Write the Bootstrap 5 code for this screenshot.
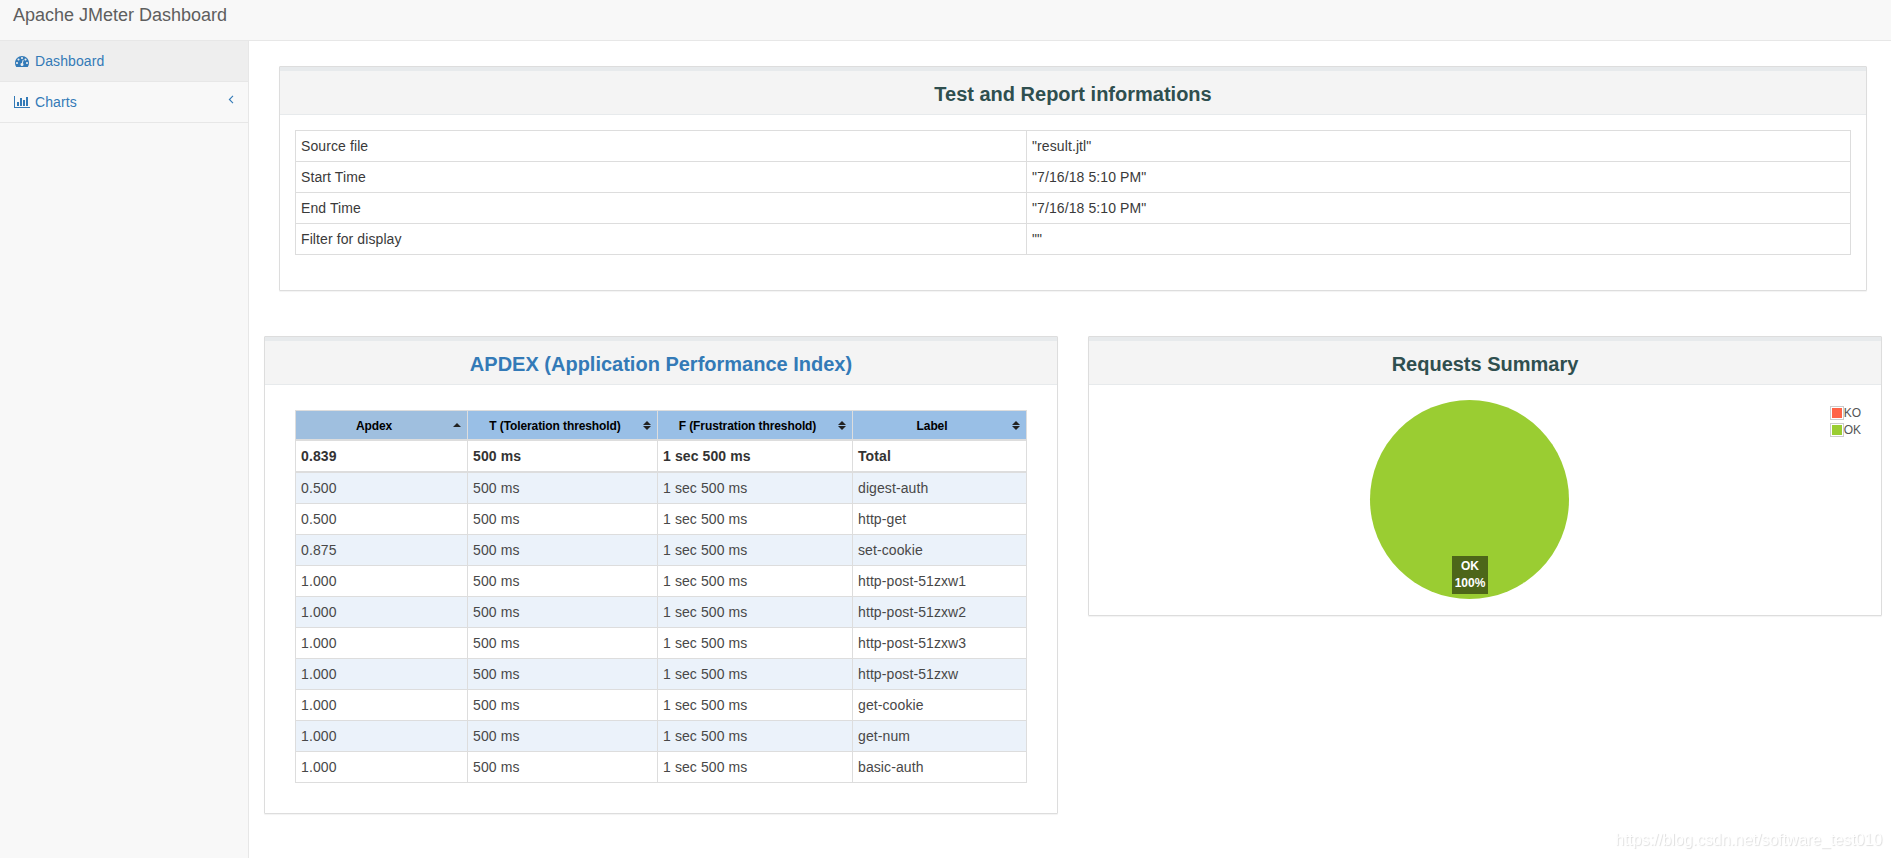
<!DOCTYPE html>
<html lang="en">
<head>
<meta charset="utf-8">
<title>Apache JMeter Dashboard</title>
<meta name="viewport" content="width=device-width, initial-scale=1">
<link href="https://cdn.jsdelivr.net/npm/bootstrap@5.3.0/dist/css/bootstrap.min.css" rel="stylesheet">
<style>
  body { font-family: "Liberation Sans", Arial, sans-serif; font-size: 14px; line-height: 20px; color: #333; background: #fff; }
  .topbar { height: 41px; background: #f8f8f8; border-bottom: 1px solid #e7e7e7; }
  .topbar .navbar-brand { font-size: 18px; line-height: 20px; color: #5e5e5e; margin: 5px 0 0 13px; padding: 0; }
  .sidebar { width: 249px; background: #f8f8f8; border-right: 1px solid #e7e7e7; }
  .sidebar .nav-link { height: 41px; padding: 10px 14px; color: #337ab7; border-bottom: 1px solid #e7e7e7; letter-spacing: .1px; }
  .sidebar .nav-link.active { background: #eee; }
  .sidebar svg { fill: #337ab7; flex: none; margin-top: 3px; }
  .ico { width: 16px; margin-right: 5px; display: flex; justify-content: center; }
  .content { padding: 25px 9px 0 15px; min-width: 0; }
  .panel { border: 1px solid #ddd; border-radius: 1px; box-shadow: 0 1px 1px rgba(0,0,0,.05); }
  .panel > .card-header { background: #f4f4f4; border-top: 4px solid #e7eaec; border-bottom: 1px solid #e7eaec; border-radius: 0; padding: 12px 15px 9px; font-size: 20px; line-height: 22px; font-weight: 700; color: #2f4f4f; text-align: center; height: 48px; }
  .panel > .card-header a { color: #337ab7; text-decoration: none; }
  .panel > .card-body { padding: 15px; }
  .info-panel { margin: 0 15px 45px; height: 225px; }
  .panels { display: grid; grid-template-columns: 1fr 1fr; gap: 30px; align-items: start; }
  .apdex-panel { height: 478px; }
  .apdex-panel > .card-body { padding: 25px 30px; }
  .pie-panel { height: 280px; }
  .grid-table { border-collapse: separate; border-spacing: 0; table-layout: fixed; border: solid #ddd; border-width: 1px 0 0 1px; margin: 0; color: #333; }
  .grid-table > :not(caption) > * > * { padding: 5px; border: solid #ddd; border-width: 0 1px 1px 0; box-shadow: none; background: none; line-height: 20px; letter-spacing: .1px; color: #3a3a3a; }
  .info-table col:first-child { width: 731px; }
  .sort-table.grid-table > tbody > tr > td { color: #484848; }
  .sort-table.grid-table > thead > tr > th { background: #99bfe6; color: #000; font-size: 12px; padding: 5px 20px 3px 5px; text-align: center; border-bottom-width: 2px; position: relative; white-space: nowrap; letter-spacing: -.1px; }
  .sort-table.grid-table > thead > tr > th.sorted { background: #9fbfdf; }
  .sort-table thead svg { position: absolute; right: 6px; top: 10px; fill: #222; }
  .sort-table.grid-table > tbody > .total > td { font-weight: 700; border-bottom-width: 2px; color: #333; }
  .sort-table.grid-table > .rows > tr:nth-child(odd) > td { background: #ebf2fa; }
  .chart { height: 200px; padding-right: 31px; }
  .pie { width: 199px; height: 199px; border-radius: 50%; background: #9acd32; margin: 0 auto; position: relative; }
  .pie-tag { position: absolute; left: 82px; bottom: 5px; width: 36px; height: 38px; padding: 2px 0; background: rgba(0,0,0,.5); color: #fff; font-size: 12px; line-height: 17px; font-weight: 700; text-align: center; }
  .legend { position: absolute; right: 20px; top: 20px; font-size: 12px; line-height: 17px; color: #545454; }
  .legend li { height: 17px; display: flex; }
  .swatch { width: 14px; height: 14px; border: 1px solid #ccc; padding: 1px; background-clip: content-box; background-color: var(--c); margin-top: 1px; }
  .stamp { position: fixed; right: 9px; bottom: 8px; font-size: 16px; line-height: 20px; letter-spacing: -.07px; color: #fff; text-shadow: 1px 1px 1px #dedede; }
</style>
</head>
<body class="vh-100 d-flex flex-column overflow-hidden">
<nav class="navbar topbar p-0 align-items-start">
  <a class="navbar-brand" href="#">Apache JMeter Dashboard</a>
</nav>
<div class="d-flex flex-grow-1">
  <aside class="sidebar flex-shrink-0">
    <nav class="nav flex-column">
      <a class="nav-link active d-flex" href="#">
        <span class="ico"><svg width="14" height="14" viewBox="0 0 1792 1792"><path d="M384 1152q0-53-37.500-90.500t-90.500-37.500-90.500 37.500-37.500 90.500 37.500 90.500 90.500 37.500 90.500-37.500 37.500-90.500zm192-448q0-53-37.500-90.500t-90.500-37.500-90.500 37.500-37.500 90.500 37.500 90.500 90.500 37.500 90.500-37.500 37.500-90.500zm428 481l101-382q6-26-7.500-48.500t-38.500-29.500-48 6.500-30 39.500l-101 382q-60 5-107 43.500t-63 98.500q-20 77 20 146t117 89 146-20 89-117q16-60-6-117t-72-91zm660-33q0-53-37.500-90.500t-90.500-37.500-90.500 37.500-37.500 90.500 37.500 90.500 90.500 37.500 90.500-37.500 37.500-90.500zm-640-640q0-53-37.500-90.500t-90.500-37.500-90.500 37.500-37.500 90.500 37.500 90.500 90.500 37.500 90.500-37.500 37.500-90.500zm448 192q0-53-37.500-90.500t-90.500-37.500-90.500 37.500-37.500 90.500 37.500 90.500 90.500 37.500 90.500-37.500 37.500-90.500zm320 448q0 261-141 483-19 29-54 29h-1402q-35 0-54-29-141-221-141-483 0-182 71-348t191-286 286-191 348-71 348 71 286 191 191 286 71 348z"/></svg></span>
        Dashboard
      </a>
      <a class="nav-link d-flex" href="#">
        <span class="ico"><svg width="16" height="14" viewBox="0 0 2048 1792"><path d="M640 896v512h-256v-512h256zm384-512v1024h-256v-1024h256zm1024 1152v128h-2048v-1536h128v1408h1920zm-640-896v768h-256v-768h256zm384-384v1152h-256v-1152h256z"/></svg></span>
        Charts
        <svg class="ms-auto" width="6" height="9" viewBox="0 0 6 9"><path d="M5 .9 1.400 4.500 5 8.100" fill="none" stroke="#337ab7" stroke-width="1.100"/></svg>
      </a>
    </nav>
  </aside>
  <main class="content flex-grow-1">
    <section class="card panel info-panel">
      <div class="card-header">Test and Report informations</div>
      <div class="card-body">
        <table class="table grid-table info-table">
          <colgroup><col><col></colgroup>
          <tbody>
            <tr><td>Source file</td><td>"result.jtl"</td></tr>
            <tr><td>Start Time</td><td>"7/16/18 5:10 PM"</td></tr>
            <tr><td>End Time</td><td>"7/16/18 5:10 PM"</td></tr>
            <tr><td>Filter for display</td><td>""</td></tr>
          </tbody>
        </table>
      </div>
    </section>
    <div class="panels">
      <section class="card panel apdex-panel">
        <div class="card-header"><a href="#">APDEX (Application Performance Index)</a></div>
        <div class="card-body">
          <table class="table grid-table sort-table">
            <colgroup><col style="width:172px"><col style="width:190px"><col style="width:195px"><col></colgroup>
            <thead>
              <tr>
                <th class="sorted">Apdex<svg width="8" height="9" viewBox="0 0 8 9"><path d="M0 6 4 2l4 4z"/></svg></th>
                <th>T (Toleration threshold)<svg width="8" height="9" viewBox="0 0 8 9"><path d="M0 4 4 0l4 4zM0 5h8L4 9z"/></svg></th>
                <th>F (Frustration threshold)<svg width="8" height="9" viewBox="0 0 8 9"><path d="M0 4 4 0l4 4zM0 5h8L4 9z"/></svg></th>
                <th>Label<svg width="8" height="9" viewBox="0 0 8 9"><path d="M0 4 4 0l4 4zM0 5h8L4 9z"/></svg></th>
              </tr>
            </thead>
            <tbody>
              <tr class="total"><td>0.839</td><td>500 ms</td><td>1 sec 500 ms</td><td>Total</td></tr>
            </tbody>
            <tbody class="rows border-0">
              <tr><td>0.500</td><td>500 ms</td><td>1 sec 500 ms</td><td>digest-auth</td></tr>
              <tr><td>0.500</td><td>500 ms</td><td>1 sec 500 ms</td><td>http-get</td></tr>
              <tr><td>0.875</td><td>500 ms</td><td>1 sec 500 ms</td><td>set-cookie</td></tr>
              <tr><td>1.000</td><td>500 ms</td><td>1 sec 500 ms</td><td>http-post-51zxw1</td></tr>
              <tr><td>1.000</td><td>500 ms</td><td>1 sec 500 ms</td><td>http-post-51zxw2</td></tr>
              <tr><td>1.000</td><td>500 ms</td><td>1 sec 500 ms</td><td>http-post-51zxw3</td></tr>
              <tr><td>1.000</td><td>500 ms</td><td>1 sec 500 ms</td><td>http-post-51zxw</td></tr>
              <tr><td>1.000</td><td>500 ms</td><td>1 sec 500 ms</td><td>get-cookie</td></tr>
              <tr><td>1.000</td><td>500 ms</td><td>1 sec 500 ms</td><td>get-num</td></tr>
              <tr><td>1.000</td><td>500 ms</td><td>1 sec 500 ms</td><td>basic-auth</td></tr>
            </tbody>
          </table>
        </div>
      </section>
      <section class="card panel pie-panel">
        <div class="card-header">Requests Summary</div>
        <div class="card-body position-relative">
          <div class="chart">
            <div class="pie"><div class="pie-tag">OK<br>100%</div></div>
          </div>
          <ul class="legend list-unstyled m-0">
            <li><span class="swatch" style="--c:#ff6347"></span>KO</li>
            <li><span class="swatch" style="--c:#9acd32"></span>OK</li>
          </ul>
        </div>
      </section>
    </div>
  </main>
</div>
<div class="stamp">https://blog.csdn.net/software_test010</div>
<script src="https://cdn.jsdelivr.net/npm/bootstrap@5.3.0/dist/js/bootstrap.bundle.min.js"></script>
</body>
</html>
